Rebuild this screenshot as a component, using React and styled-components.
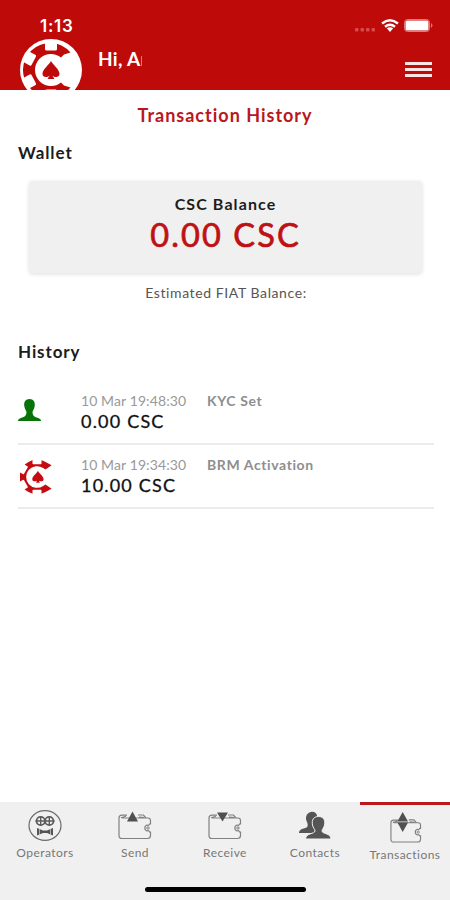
import React from "react";
import styled, { createGlobalStyle } from "styled-components";

const transactions = [
  {
    id: 1,
    type: "kyc",
    date: "10 Mar 19:48:30",
    label: "KYC Set",
    amount: "0.00 CSC",
  },
  {
    id: 2,
    type: "activation",
    date: "10 Mar 19:34:30",
    label: "BRM Activation",
    amount: "10.00 CSC",
  },
];

const ChipLogo = () => (
  <svg width="62" height="62" viewBox="-31 -31 62 62">
    <circle r="31" fill="#fff" />
    <path
      d="M19.500 -17.500A27 27 0 1 0 19.500 17.500L13 15.500L10 12.500A16 16 0 1 1 10 -12.500L13 -15.500Z"
      fill="#bf0a0a"
    />
    {[-90, -152, 152, 90].map((angle) => (
      <rect
        key={angle}
        x="19.500"
        y="-6"
        width="9"
        height="12"
        rx="1.500"
        fill="#fff"
        transform={`rotate(${angle})`}
      />
    ))}
    <path
      d="M0 -9C2 -5 8.500 -1 8.500 4C8.500 7.500 4 8 1.300 5.500L3.500 9H-3.500L-1.300 5.500C-4 8 -8.500 7.500 -8.500 4C-8.500 -1 -2 -5 0 -9Z"
      fill="#bf0a0a"
    />
  </svg>
);

const ActivationIcon = () => (
  <svg width="34" height="36" viewBox="-18 -18 36 36" fill="#c40c10">
    <path d="M9 -16L15.500 -12.500L9 -8L6.500 -9.500A11.500 11.500 0 1 0 6.500 9.500L9 8L15.500 12.500L9 16A18 18 0 0 1 -9 16A18 18 0 0 1 -9 -16A18 18 0 0 1 9 -16Z" />
    {[-90, -150, 150, 90].map((angle) => (
      <rect
        key={angle}
        x="13.600"
        y="-4.800"
        width="6"
        height="9.600"
        rx="1"
        fill="#fff"
        transform={`rotate(${angle})`}
      />
    ))}
    <path d="M1 -6.500C2 -3.500 7 -1 7 2.500C7 5 4 5 2 4L3 6H-1L0 4C-2 5 -5 5 -5 2.500C-5 -1 0 -3.500 1 -6.500Z" />
  </svg>
);

const PersonIcon = () => (
  <svg width="24" height="22" viewBox="0 0 24 22">
    <path
      d="M11.500 0C15.500 0 17.300 3 16.700 7C16.300 10 15 11 14.500 13C14.500 17 17 18 20 19C22 19.600 23 20.500 23 22H0C0 20.500 1 19.600 3 19C6 18 8.500 17 8.500 13C8 11 6.700 10 6.300 7C5.700 3 7.500 0 11.500 0Z"
      fill="#087408"
    />
  </svg>
);

const OperatorsIcon = () => (
  <svg width="34" height="32" viewBox="0 0 34 32" fill="none">
    <ellipse cx="17" cy="15.500" rx="16" ry="14.800" stroke="#6a6a6a" strokeWidth="1.200" />
    <g stroke="#5c5c5c">
      <circle cx="12.700" cy="11" r="4.200" strokeWidth="1.800" />
      <circle cx="21.300" cy="11" r="4.200" strokeWidth="1.800" />
      <path d="M7.500 11H26.500M12.700 6.500V15.500M21.300 6.500V15.500" strokeWidth="1.400" />
    </g>
    <path d="M9 18L15 20.500H19L25 18V25.500L19 23H15L9 25.500Z" fill="#555" />
    <path d="M11.500 18V26M22.500 18V26" stroke="#d5d5d5" strokeWidth="0.700" />
  </svg>
);

const WalletIcon = ({ direction }) => (
  <svg width="34" height="32" viewBox="0 0 34 32" fill="none">
    <g
      transform={
        direction === "both" ? "translate(2 3.200) scale(0.940)" : undefined
      }
    >
      <path
        d="M4 8H30Q32.500 8 32.500 10.500V14H31.500Q31 16 29 15Q26.500 16 27 18Q26.500 20 29 21Q31 20 31.500 22H32.500V25.500Q32.500 28.500 29.500 28.500H4Q1 28.500 1 25.500V8Q1 5.200 4 5.200H9M20 5L25.500 5L28 8M3 7.800L8 6.300M21 7L26 7.500"
        stroke="#808080"
        strokeWidth="1.200"
      />
      <circle cx="30" cy="18" r="1.200" stroke="#808080" />
    </g>
    {direction === "up" && <path d="M14.500 1.500L20 11.500H9Z" fill="#505050" />}
    {direction === "down" && <path d="M14.500 11.500L20 2.500H9Z" fill="#505050" />}
    {direction === "both" && (
      <>
        <path d="M14.700 0L20 9.500H9.400Z" fill="#505050" />
        <path d="M14.700 20L20 10.500H9.400Z" fill="#505050" />
      </>
    )}
  </svg>
);

const ContactsIcon = () => (
  <svg width="34" height="32" viewBox="0 0 34 32" fill="#555">
    <path d="M13 2C17 1 20 4 19 9C18 12 17 14 17 16L19 23H1C1 19 5 19 8.500 17.500C10 17 10 14 9 12C7 8 8 3 13 2Z" />
    <path
      d="M20.500 6.500C25.500 6.500 27.500 10 26.500 15C26 18 24 19 24 21C24 24 33 23 33 29H7.500C7.500 23 17 24 17 21C17 19 15 18 14.500 15C13.500 10 15.500 6.500 20.500 6.500Z"
      stroke="#f0f0f0"
      strokeWidth="1"
    />
  </svg>
);

const tabs = [
  { name: "Operators", icon: <OperatorsIcon /> },
  { name: "Send", icon: <WalletIcon direction="up" /> },
  { name: "Receive", icon: <WalletIcon direction="down" /> },
  { name: "Contacts", icon: <ContactsIcon /> },
  { name: "Transactions", icon: <WalletIcon direction="both" />, active: true },
];

const App = () => {
  return (
    <>
      <GlobalStyle />
      <Screen>
        <Header>
          <StatusBar>
            <Time>1:13</Time>
            <StatusIcons>
              <svg width="21" height="5" viewBox="0 0 21 5" fill="#d94a4a">
                <rect x="0" y="1" width="3.500" height="3.500" rx="1" />
                <rect x="5.500" y="1" width="3.500" height="3.500" rx="1" />
                <rect x="11" y="1" width="3.500" height="3.500" rx="1" />
                <rect x="16.500" y="1" width="3.500" height="3.500" rx="1" />
              </svg>
              <svg width="18" height="13" viewBox="0 0 18 13" fill="none">
                <path
                  d="M1 4.500Q9 -2 17 4.500M4 7.700Q9 3.600 14 7.700"
                  stroke="#fff"
                  strokeWidth="2.400"
                />
                <path d="M5.800 9.300Q9 7 12.200 9.300L9 13Z" fill="#fff" />
              </svg>
              <svg width="29" height="13" viewBox="0 0 29 13">
                <rect
                  x="0.500"
                  y="0.500"
                  width="25"
                  height="12"
                  rx="3"
                  fill="none"
                  stroke="#e27b7b"
                />
                <rect x="1.500" y="1.500" width="23" height="10" rx="1.500" fill="#fff" />
                <path d="M27 4Q30 6.500 27 9Z" fill="#e27b7b" />
              </svg>
            </StatusIcons>
          </StatusBar>
          <UserBar>
            <LogoBox>
              <ChipLogo />
            </LogoBox>
            <Greeting>Hi, An</Greeting>
            <MenuButton aria-label="Menu">
              <MenuLine />
              <MenuLine />
              <MenuLine />
            </MenuButton>
          </UserBar>
        </Header>

        <Content>
          <PageTitle>Transaction History</PageTitle>
          <SectionTitle>Wallet</SectionTitle>
          <BalanceCard>
            <BalanceLabel>CSC Balance</BalanceLabel>
            <BalanceValue>0.00 CSC</BalanceValue>
          </BalanceCard>
          <FiatBalance>Estimated FIAT Balance:</FiatBalance>
          <SectionTitle>History</SectionTitle>
          <TransactionList>
            {transactions.map((item) => (
              <TransactionRow key={item.id}>
                <IconCell $type={item.type}>
                  {item.type === "kyc" ? <PersonIcon /> : <ActivationIcon />}
                </IconCell>
                <Details>
                  <Meta>
                    <DateText>{item.date}</DateText>
                    <TypeText>{item.label}</TypeText>
                  </Meta>
                  <Amount>{item.amount}</Amount>
                </Details>
              </TransactionRow>
            ))}
          </TransactionList>
        </Content>

        <TabBar>
          {tabs.map((tab) => (
            <Tab key={tab.name} $active={tab.active}>
              {tab.icon}
              <TabLabel>{tab.name}</TabLabel>
            </Tab>
          ))}
          <HomeIndicator />
        </TabBar>
      </Screen>
    </>
  );
};

const GlobalStyle = createGlobalStyle`
  * {
    box-sizing: border-box;
  }

  body {
    margin: 0;
    background-color: #fff;
    font-family: Lato, "Liberation Sans", sans-serif;
  }

  svg {
    display: block;
    flex-shrink: 0;
  }
`;

const Screen = styled.div`
  display: flex;
  flex-direction: column;
  width: 450px;
  height: 900px;
  overflow: hidden;
  background-color: #fff;
`;

const Header = styled.header`
  height: 90px;
  flex-shrink: 0;
  overflow: hidden;
  background-color: #bf0a0a;
  color: #fff;
`;

const StatusBar = styled.div`
  display: flex;
  justify-content: space-between;
  align-items: flex-start;
  height: 37px;
  padding: 16px 17px 0 40px;
`;

const Time = styled.div`
  font-family: Inter, sans-serif;
  font-size: 17px;
  font-weight: 600;
  letter-spacing: 0.7px;
  line-height: 20px;
`;

const StatusIcons = styled.div`
  display: flex;
  align-items: center;
  gap: 5px;
  padding-top: 3px;

  svg:first-child {
    margin-top: 8px;
  }
`;

const UserBar = styled.div`
  display: flex;
  align-items: flex-start;
  padding: 0 18px 0 20px;
`;

const LogoBox = styled.div`
  width: 62px;
  margin-top: 2px;
`;

const Greeting = styled.div`
  width: 44px;
  margin: 10px 0 0 16px;
  overflow: hidden;
  white-space: nowrap;
  font-size: 19px;
  font-weight: 700;
  letter-spacing: 0.3px;
  line-height: 24px;
`;

const MenuButton = styled.button`
  display: flex;
  flex-direction: column;
  gap: 3px;
  width: 27px;
  margin: 25px 0 0 auto;
  padding: 0;
  border: none;
  background: none;
`;

const MenuLine = styled.span`
  height: 3px;
  background-color: #fbe4e4;
`;

const Content = styled.main`
  flex: 1;
  padding: 13px 16px 0 18px;
`;

const PageTitle = styled.h1`
  margin: 0 2px 0 0;
  text-align: center;
  color: #b9181c;
  font-size: 18px;
  font-weight: 700;
  letter-spacing: 1px;
  line-height: 24px;
`;

const SectionTitle = styled.h2`
  margin: 16px 0 0;
  color: #1c1c1c;
  font-size: 17px;
  font-weight: 700;
  letter-spacing: 0.9px;
  line-height: 20px;
`;

const BalanceCard = styled.section`
  height: 92px;
  margin: 18px 12px 0 11px;
  padding-top: 12px;
  border-radius: 4px;
  background-color: #f0f0f0;
  box-shadow: 0 1px 4px rgba(0, 0, 0, 0.14);
  text-align: center;
`;

const BalanceLabel = styled.div`
  color: #1c1c1c;
  font-size: 16px;
  font-weight: 700;
  letter-spacing: 1.1px;
  line-height: 22px;
`;

const BalanceValue = styled.div`
  color: #bf1013;
  font-size: 32.5px;
  font-weight: 400;
  letter-spacing: 2.1px;
  line-height: 39px;
  -webkit-text-stroke: 0.7px #bf1013;
`;

const FiatBalance = styled.div`
  margin: 10px 0 39px;
  text-align: center;
  color: #555;
  font-size: 14px;
  letter-spacing: 0.6px;
  line-height: 20px;

  & + ${SectionTitle} {
    margin-top: 0;
  }
`;

const TransactionList = styled.div`
  margin-top: 19px;
`;

const TransactionRow = styled.div`
  display: flex;
  height: 64px;
  border-bottom: 2px solid #ebebeb;
`;

const IconCell = styled.div`
  width: 63px;
  padding: ${(props) => (props.$type === "kyc" ? "18px 0 0" : "14px 0 0 2px")};
`;

const Details = styled.div`
  padding-top: 10px;
`;

const Meta = styled.div`
  display: flex;
  gap: 20px;
  color: #999;
  font-size: 14px;
  line-height: 20px;
`;

const DateText = styled.span`
  width: 106px;
  letter-spacing: 0.1px;
  white-space: nowrap;
`;

const TypeText = styled.span`
  color: #8e8e8e;
  font-weight: 700;
  letter-spacing: 0.6px;
`;

const Amount = styled.div`
  color: #111;
  font-size: 18px;
  letter-spacing: 1.2px;
  line-height: 21px;
  -webkit-text-stroke: 0.3px #111;
`;

const TabBar = styled.nav`
  position: relative;
  display: flex;
  flex-shrink: 0;
  height: 98px;
  background-color: #f0f0f0;
`;

const Tab = styled.div`
  display: flex;
  flex: 1;
  flex-direction: column;
  align-items: center;
  padding-top: ${(props) => (props.$active ? "7px" : "8px")};
  border-top: ${(props) => (props.$active ? "3px solid #bb191c" : "none")};
`;

const TabLabel = styled.span`
  margin-top: 3px;
  color: #777;
  font-size: 12px;
  letter-spacing: 0.45px;
  line-height: 16px;
`;

/* Sits over the tab bar, like the system home gesture bar */
const HomeIndicator = styled.div`
  position: absolute;
  bottom: 8px;
  left: 145px;
  width: 161px;
  height: 5px;
  border-radius: 3px;
  background-color: #000;
`;

export default App;
